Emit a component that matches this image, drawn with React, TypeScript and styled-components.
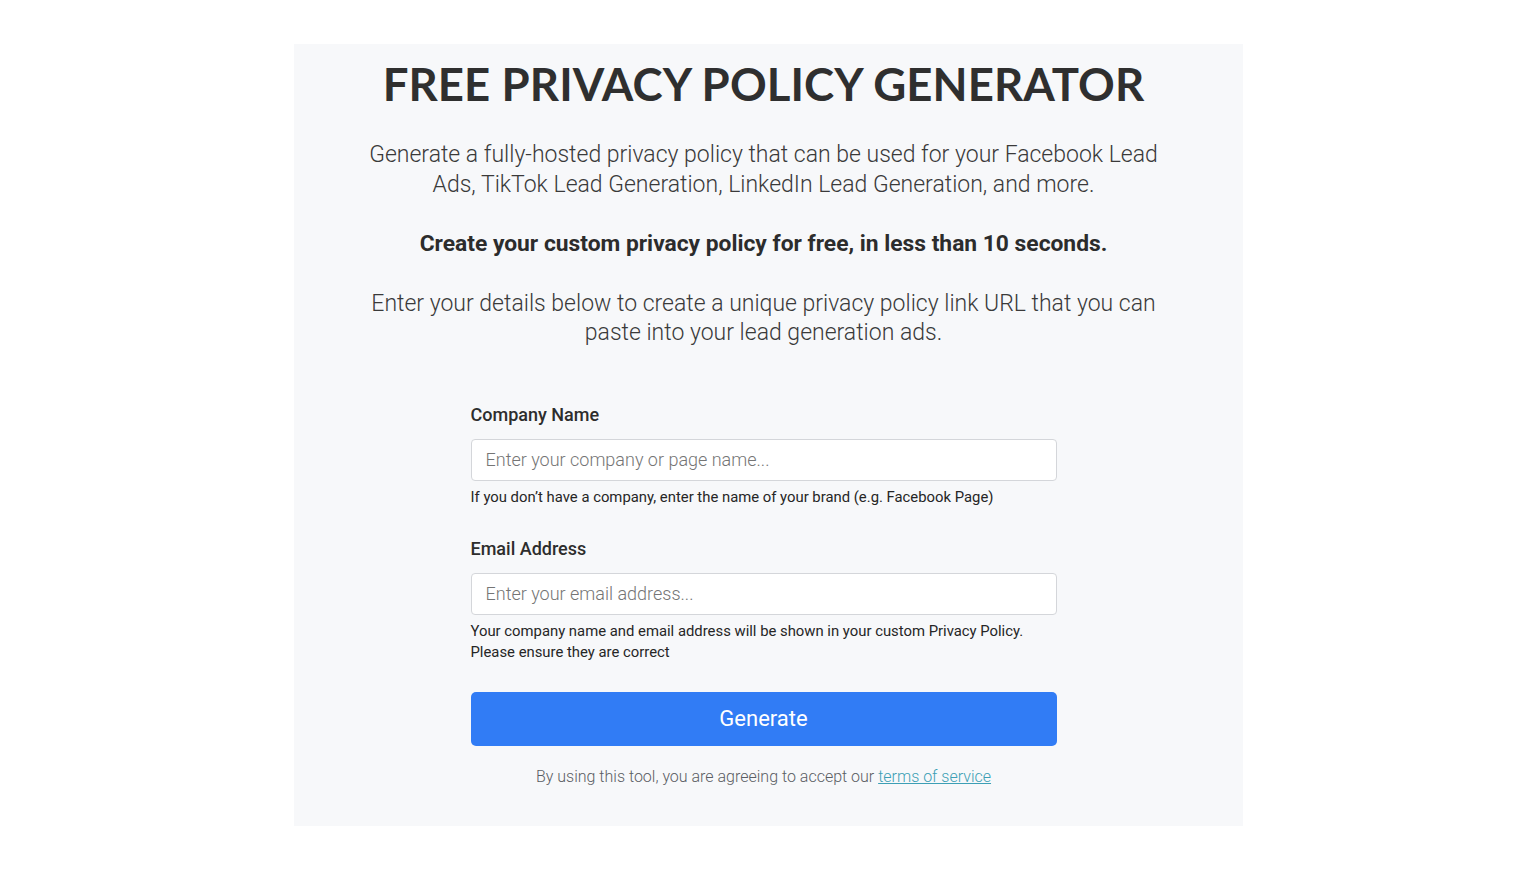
import React from 'react'
import styled, { createGlobalStyle } from 'styled-components'

const GlobalStyle = createGlobalStyle`
    html, body {
        margin: 0;
        padding: 0;
        background: #ffffff;
    }
    * {
        box-sizing: border-box;
    }
`

const Page = styled.div`
    width: 1536px;
    height: 870px;
    display: flex;
    justify-content: center;
    padding-top: 44px;
`

const Panel = styled.div`
    width: 949px;
    height: 782px;
    background: #f7f8fa;
    display: flex;
    flex-direction: column;
    align-items: center;
    padding-right: 9px;
    font-family: Roboto, "Liberation Sans", sans-serif;
`

const Title = styled.h1`
    margin: 15px 0 0;
    font-family: Lato, "Liberation Sans", sans-serif;
    font-weight: 700;
    font-size: 45.5px;
    line-height: 50px;
    letter-spacing: 0.1px;
    color: #2f2f2f;
`

const Lead = styled.p<{ $bold?: boolean }>`
    margin: 0;
    width: 800px;
    text-align: center;
    font-size: ${({ $bold }) => ($bold ? '22.8px' : '23px')};
    font-weight: ${({ $bold }) => ($bold ? 700 : 300)};
    line-height: 29.5px;
    color: ${({ $bold }) => ($bold ? '#2c2c2c' : '#3a3a3a')};
`

const Intro = styled.div`
    display: flex;
    flex-direction: column;
    align-items: center;
    gap: 30px;
    margin-top: 31px;
`

const Form = styled.form`
    width: 586px;
    margin-top: 55px;
    display: flex;
    flex-direction: column;
`

const Field = styled.div`
    display: flex;
    flex-direction: column;
    margin-bottom: 29px;
`

const Label = styled.label`
    font-size: 18px;
    font-weight: 500;
    color: #2d2d2d;
    line-height: 24px;
    margin-bottom: 12px;
`

const Input = styled.input`
    height: 42px;
    width: 100%;
    border: 1px solid #d4d6da;
    border-radius: 4px;
    background: #ffffff;
    padding: 0 14px;
    font-family: Roboto, "Liberation Sans", sans-serif;
    font-size: 18px;
    font-weight: 300;
    color: #333;
    outline: none;

    ::placeholder {
        color: #70737a;
    }
`

const Help = styled.div`
    margin-top: 6px;
    font-size: 14.85px;
    line-height: 21px;
    color: #262626;
`

const Button = styled.button`
    height: 54px;
    width: 100%;
    border: none;
    border-radius: 5px;
    background: #317cf5;
    color: #ffffff;
    font-family: Roboto, "Liberation Sans", sans-serif;
    font-size: 22px;
    font-weight: 400;
    cursor: pointer;
`

const Terms = styled.p`
    margin: 20px 0 0;
    text-align: center;
    font-size: 16px;
    font-weight: 300;
    line-height: 22px;
    color: #5a5d63;

    a {
        color: #3c9fb5;
        text-decoration: underline;
    }
`

const App: React.FC = () => {
    return (
        <>
            <GlobalStyle />
            <Page>
                <Panel>
                    <Title>FREE PRIVACY POLICY GENERATOR</Title>
                    <Intro>
                        <Lead>
                            Generate a fully-hosted privacy policy that can be used for your Facebook Lead
                            Ads, TikTok Lead Generation, LinkedIn Lead Generation, and more.
                        </Lead>
                        <Lead $bold>Create your custom privacy policy for free, in less than 10 seconds.</Lead>
                        <Lead>
                            Enter your details below to create a unique privacy policy link URL that you can
                            paste into your lead generation ads.
                        </Lead>
                    </Intro>
                    <Form onSubmit={(e) => e.preventDefault()}>
                        <Field>
                            <Label>Company Name</Label>
                            <Input placeholder="Enter your company or page name..." />
                            <Help>If you don’t have a company, enter the name of your brand (e.g. Facebook Page)</Help>
                        </Field>
                        <Field>
                            <Label>Email Address</Label>
                            <Input placeholder="Enter your email address..." />
                            <Help>
                                Your company name and email address will be shown in your custom Privacy Policy.
                                <br />
                                Please ensure they are correct
                            </Help>
                        </Field>
                        <Button type="submit">Generate</Button>
                        <Terms>
                            By using this tool, you are agreeing to accept our <a href="#">terms of service</a>
                        </Terms>
                    </Form>
                </Panel>
            </Page>
        </>
    )
}

export default App
